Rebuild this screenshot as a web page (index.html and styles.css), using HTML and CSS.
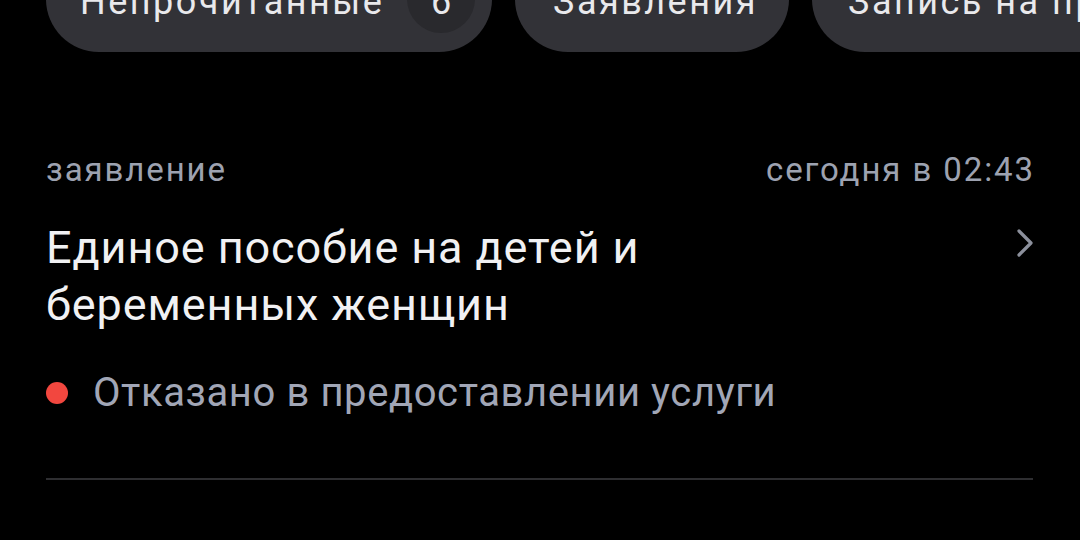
FILE: index.html
```html
<!DOCTYPE html>
<html lang="ru">
<head>
<meta charset="utf-8">
<link rel="stylesheet" href="styles.css">
</head>
<body>
<div class="chips">
  <div class="chip chip-unread"><span class="chip-label">Непрочитанные</span><span class="badge">6</span></div>
  <div class="chip chip-apps"><span class="chip-label">Заявления</span></div>
  <div class="chip chip-rec"><span class="chip-label">Запись на приём</span></div>
</div>
<div class="item">
  <div class="meta">
    <span class="type">заявление</span>
    <span class="time">сегодня в 02:43</span>
  </div>
  <div class="title-row">
    <div class="title">Единое пособие на детей и<br>беременных женщин</div>
    <svg class="chev" width="18" height="28" viewBox="0 0 18 28"><path d="M3 2 L15 14 L3 26" fill="none" stroke="#8c909c" stroke-width="3.2" stroke-linecap="round" stroke-linejoin="round"/></svg>
  </div>
  <div class="status"><span class="dot"></span><span class="status-text">Отказано в предоставлении услуги</span></div>
</div>
<div class="divider"></div>
</body>
</html>
```
FILE: styles.css
```css
html, body {
  margin: 0;
  padding: 0;
  background: #000;
  width: 1080px;
  height: 540px;
  overflow: hidden;
  font-family: Roboto, "Noto Sans", sans-serif;
}
.chips {
  display: flex;
  gap: 23px;
  margin-top: -54px;
  padding-left: 46px;
  white-space: nowrap;
}
.chip {
  flex: none;
  height: 106px;
  border-radius: 53px;
  background: #323237;
  display: flex;
  align-items: center;
  box-sizing: border-box;
  color: #e9e9ec;
  font-size: 36px;
  letter-spacing: 2.5px;
  padding-top: 6px;
}
.chip-unread {
  width: 446px;
  padding-left: 34px;
  padding-right: 17px;
  justify-content: space-between;
}
.chip-apps {
  width: 274px;
  padding-left: 38px;
}
.chip-rec {
  width: 400px;
  padding-left: 36px;
}
.badge {
  width: 68px;
  height: 68px;
  margin-top: -6px;
  border-radius: 50%;
  background: #29292d;
  display: flex;
  align-items: center;
  justify-content: center;
  letter-spacing: 0;
  padding-top: 6px;
  box-sizing: border-box;
}
.item {
  padding: 0 45px 0 46px;
}
.meta {
  display: flex;
  justify-content: space-between;
  margin-top: 98px;
  font-size: 33px;
  line-height: 40px;
  color: #9da2b0;
  letter-spacing: 1.9px;
}
.title-row {
  display: flex;
  justify-content: space-between;
  align-items: flex-start;
  margin-top: 29px;
}
.title {
  font-size: 45px;
  line-height: 57px;
  letter-spacing: 0.9px;
  color: #f1f1f3;
}
.chev {
  margin-top: 10px;
  margin-right: 1px;
}
.status {
  display: flex;
  align-items: center;
  margin-top: 36px;
  gap: 25px;
}
.dot {
  width: 22px;
  height: 22px;
  border-radius: 50%;
  background: #f2473f;
}
.status-text {
  font-size: 40px;
  line-height: 48px;
  letter-spacing: 0.6px;
  color: #a1a6b6;
}
.divider {
  margin: 61px 47px 0 46px;
  height: 2px;
  background: #2e2e31;
}
```
